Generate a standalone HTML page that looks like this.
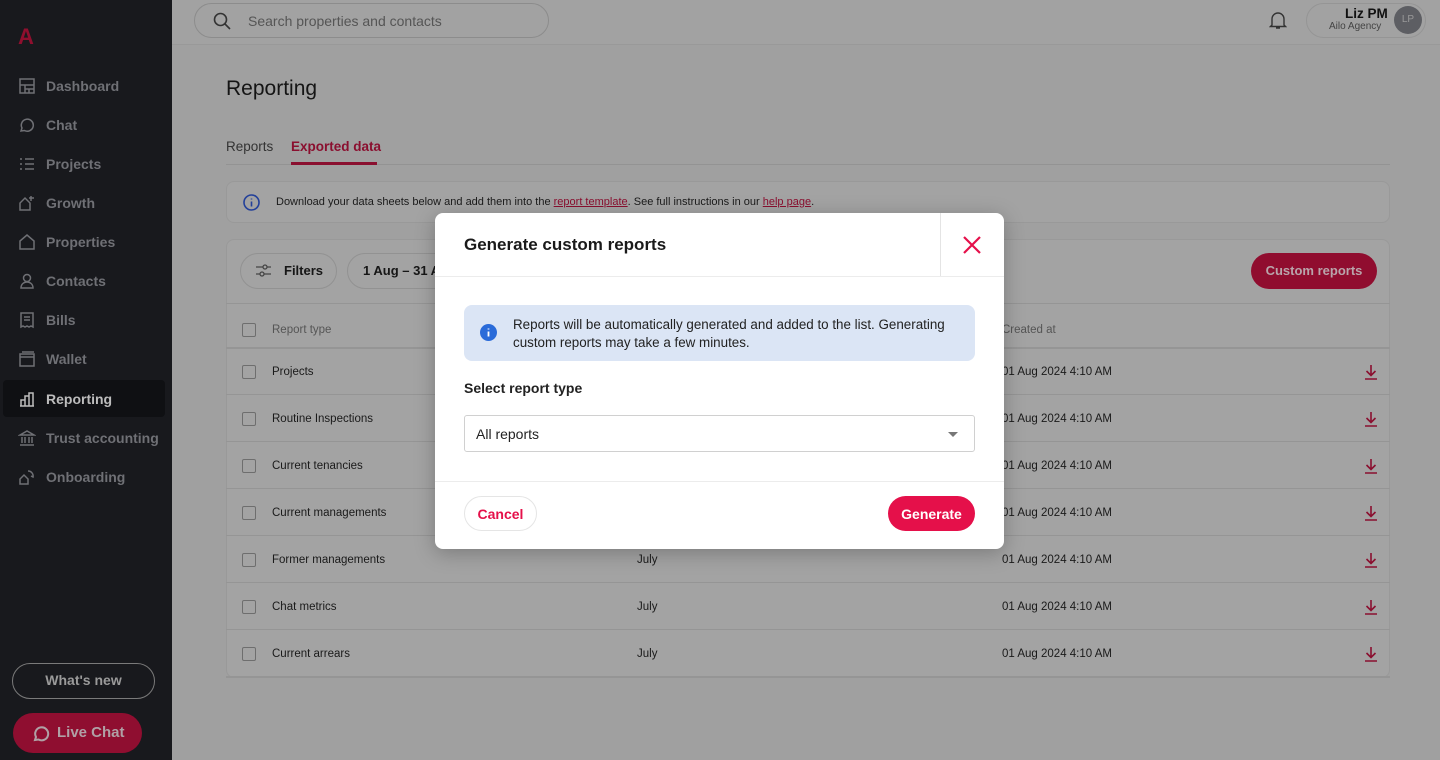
<!DOCTYPE html>
<html><head><meta charset="utf-8"><style>
*{box-sizing:border-box;margin:0;padding:0}
body{width:1440px;height:760px;overflow:hidden;font-family:"Liberation Sans",sans-serif;background:#a0a0a0;position:relative;color:#161616}
.sb{position:absolute;left:0;top:0;width:172px;height:760px;background:#18191d}
.logo{position:absolute;left:18px;top:24px;color:#8f0f2e;font-weight:bold;font-size:22px}
.nav{position:absolute;left:0;width:172px;height:37px;display:flex;align-items:center;color:#6f7075;font-size:14px;font-weight:bold}
.nav svg{position:absolute;left:18px;width:18px;height:18px}
.nav span{position:absolute;left:46px}
.nav.act{left:3px;width:162px;background:#0f1013;border-radius:4px;color:#bdbdbd}
.nav.act svg{left:15px}.nav.act span{left:43px}
.wn{position:absolute;left:12px;top:663px;width:143px;height:36px;border:1.5px solid #7a7a7a;border-radius:18px;color:#9a9a9a;font-size:14px;font-weight:bold;text-align:center;line-height:33px}
.lc{position:absolute;left:13px;top:713px;width:129px;height:40px;background:#8f0e30;border-radius:20px;color:#b0a0a5;font-size:15px;font-weight:bold;line-height:40px;padding-left:44px}
.top{position:absolute;left:172px;top:0;right:0;height:45px;background:#a2a2a2;border-bottom:1px solid #999}
.search{position:absolute;left:194px;top:3px;width:355px;height:35px;border:1px solid #8c8c8c;border-radius:18px;font-size:14px;color:#555;line-height:34px;padding-left:53px}
.user{position:absolute;left:1306px;top:3px;width:120px;height:35px;border:1px solid #959595;border-radius:18px}
.av{position:absolute;left:1394px;top:6px;width:28px;height:28px;border-radius:50%;background:#5d5e63;color:#999;font-size:10px;text-align:center;line-height:28px}
h1{position:absolute;left:226px;top:77px;font-size:21px;font-weight:normal;color:#151515}
.tabs{position:absolute;left:226px;top:139px;width:1164px;height:26px;border-bottom:1px solid #939393;font-size:13.5px}
.card{position:absolute;background:#a3a3a3;border:1px solid #999;border-radius:8px}
.t{position:absolute;font-size:11.5px;color:#1a1a1a}
.row{position:absolute;left:226px;width:1164px;border-top:1px solid #959595}
.cb{position:absolute;left:242px;width:14px;height:14px;border:1.5px solid #6e6e6e;border-radius:2px}
.dl{position:absolute;left:1364px;width:14px;height:16px}
.modal{position:absolute;left:435px;top:213px;width:569px;height:336px;background:#fff;border-radius:8px;box-shadow:0 4px 20px rgba(0,0,0,.25)}
</style></head><body>
<div class="sb">
<div class="logo">A</div>
<div class="nav" style="top:67px"><svg viewBox="0 0 18 18" fill="none" stroke="#6f7075" stroke-width="1.5"><rect x="2" y="2" width="14" height="14"/><path d="M2 8h14M7 8v8M11 12v4M7 12h9"/></svg><span>Dashboard</span></div>
<div class="nav" style="top:106px"><svg viewBox="0 0 18 18" fill="none" stroke="#6f7075" stroke-width="1.5"><path d="M3 15l1-3a6 6 0 1 1 2.5 2.5z"/></svg><span>Chat</span></div>
<div class="nav" style="top:145px"><svg viewBox="0 0 18 18" fill="none" stroke="#6f7075" stroke-width="1.5"><path d="M7 4h9M7 9h9M7 14h9M2 4h2M2 9h2M2 14h2"/></svg><span>Projects</span></div>
<div class="nav" style="top:184px"><svg viewBox="0 0 18 18" fill="none" stroke="#6f7075" stroke-width="1.5"><path d="M2 16V9l5-5 5 5v7zM13 2v5M11 4h5"/></svg><span>Growth</span></div>
<div class="nav" style="top:223px"><svg viewBox="0 0 18 18" fill="none" stroke="#6f7075" stroke-width="1.5"><path d="M2 16V8l7-6 7 6v8z"/></svg><span>Properties</span></div>
<div class="nav" style="top:262px"><svg viewBox="0 0 18 18" fill="none" stroke="#6f7075" stroke-width="1.5"><circle cx="9" cy="6" r="3.5"/><path d="M3 16c0-4 3-6 6-6s6 2 6 6z"/></svg><span>Contacts</span></div>
<div class="nav" style="top:301px"><svg viewBox="0 0 18 18" fill="none" stroke="#6f7075" stroke-width="1.5"><path d="M3 2h12v14l-2-1-2 1-2-1-2 1-2-1-2 1zM6 6h6M6 9h6"/></svg><span>Bills</span></div>
<div class="nav" style="top:340px"><svg viewBox="0 0 18 18" fill="none" stroke="#6f7075" stroke-width="1.5"><rect x="2" y="4" width="14" height="12"/><path d="M2 7h14M4 2h12"/></svg><span>Wallet</span></div>
<div class="nav act" style="top:380px"><svg viewBox="0 0 18 18" fill="none" stroke="#bdbdbd" stroke-width="1.5"><path d="M2 16h14M3 16v-6h4v6M7 16V6h4v10M11 16V3h4v13"/></svg><span>Reporting</span></div>
<div class="nav" style="top:419px"><svg viewBox="0 0 18 18" fill="none" stroke="#6f7075" stroke-width="1.5"><path d="M2 6l7-4 7 4zM4 8v6M7 8v6M11 8v6M14 8v6M2 16h14"/></svg><span>Trust accounting</span></div>
<div class="nav" style="top:458px"><svg viewBox="0 0 18 18" fill="none" stroke="#6f7075" stroke-width="1.5"><path d="M2 16v-5l4-4 4 4v5zM10 3a5 5 0 0 1 5 6l-2-1"/></svg><span>Onboarding</span></div>
<div class="wn">What's new</div>
<div class="lc"><svg style="position:absolute;left:19px;top:11px" width="18" height="18" viewBox="0 0 18 18" fill="none" stroke="#b0a0a5" stroke-width="2"><path d="M3 16l1-3a6.5 6.5 0 1 1 2.5 2.5z"/></svg>Live Chat</div>
</div>
<div class="top"></div>
<div class="search"><svg style="position:absolute;left:18px;top:8px" width="18" height="18" viewBox="0 0 18 18" fill="none" stroke="#333" stroke-width="1.6"><circle cx="7.5" cy="7.5" r="6"/><path d="M12 12l5 5"/></svg>Search properties and contacts</div>
<svg style="position:absolute;left:1269px;top:11px" width="18" height="19" viewBox="0 0 18 19" fill="none" stroke="#333" stroke-width="1.4"><path d="M3 14V8a6 6 0 0 1 12 0v6l1.5 1.5h-15zM7 17h4"/></svg>
<div class="user"></div>
<div style="position:absolute;left:1345px;top:6px;font-size:13.5px;font-weight:bold;color:#111">Liz PM</div>
<div style="position:absolute;left:1329px;top:21px;font-size:10px;color:#444">Ailo Agency</div>
<div class="av">LP</div>
<h1>Reporting</h1>
<div class="tabs"><span style="position:absolute;left:0;top:0;color:#333">Reports</span><span style="position:absolute;left:65px;top:0;color:#8a0f2f;font-weight:bold">Exported data</span><div style="position:absolute;left:65px;top:23px;width:86px;height:3px;background:#8a0f2f"></div></div>
<div class="card" style="left:226px;top:181px;width:1164px;height:42px"></div>
<svg style="position:absolute;left:243px;top:194px" width="17" height="17" viewBox="0 0 17 17" fill="none" stroke="#23409a" stroke-width="1.6"><circle cx="8.5" cy="8.5" r="7.5"/><path d="M8.5 7.5v5M8.5 4.5v1"/></svg>
<div class="t" style="left:276px;top:196px;font-size:11px">Download your data sheets below and add them into the <u style="color:#8a0f2f">report template</u>. See full instructions in our <u style="color:#8a0f2f">help page</u>.</div>
<div class="card" style="left:226px;top:239px;width:1164px;height:439px"></div>
<div style="position:absolute;left:240px;top:253px;width:97px;height:36px;border:1px solid #929292;border-radius:18px;font-size:13px;font-weight:bold;line-height:34px;padding-left:43px">Filters</div>
<svg style="position:absolute;left:255px;top:263px" width="17" height="15" viewBox="0 0 17 15" fill="none" stroke="#444" stroke-width="1.3"><path d="M1 4h15M1 11h15"/><circle cx="10" cy="4" r="2" fill="#a3a3a3"/><circle cx="7" cy="11" r="2" fill="#a3a3a3"/></svg>
<div style="position:absolute;left:347px;top:253px;width:120px;height:36px;border:1px solid #929292;border-radius:18px;font-size:13px;font-weight:bold;line-height:34px;padding-left:15px">1 Aug – 31 Aug</div>
<div style="position:absolute;left:1251px;top:253px;width:126px;height:36px;background:#900d2f;border-radius:18px;color:#b9a5ab;font-size:13px;font-weight:bold;text-align:center;line-height:36px">Custom reports</div>
<div class="row" style="top:303px"></div>
<div class="cb" style="top:323px"></div><div class="t" style="left:272px;top:324px;color:#555">Report type</div>
<div class="t" style="left:1002px;top:324px;color:#555">Created at</div>
<div class="row" style="top:347px;border-top:2px solid #959595"></div>
<div id="rows"></div>
<div class="modal">
<div style="position:absolute;left:29px;top:22px;font-size:17px;font-weight:bold;color:#1a1a1a">Generate custom reports</div>
<div style="position:absolute;left:505px;top:0;width:1px;height:63px;background:#e4e4e4"></div>
<svg style="position:absolute;left:528px;top:23px" width="18" height="18" viewBox="0 0 18 18" stroke="#e5104a" stroke-width="2.2"><path d="M1 1l16 16M17 1L1 17"/></svg>
<div style="position:absolute;left:0;top:63px;width:569px;height:1px;background:#ececec"></div>
<div style="position:absolute;left:29px;top:92px;width:511px;height:56px;background:#dbe5f5;border-radius:8px"></div>
<svg style="position:absolute;left:45px;top:111px" width="17" height="17" viewBox="0 0 17 17"><circle cx="8.5" cy="8.5" r="8.5" fill="#2a6bd9"/><path d="M8.5 7.5v5M8.5 4.5v1" stroke="#fff" stroke-width="1.8"/></svg>
<div style="position:absolute;left:78px;top:103px;font-size:13.4px;line-height:18px;color:#222;width:455px">Reports will be automatically generated and added to the list. Generating custom reports may take a few minutes.</div>
<div style="position:absolute;left:29px;top:167px;font-size:14px;font-weight:bold;color:#222">Select report type</div>
<div style="position:absolute;left:29px;top:202px;width:511px;height:37px;border:1px solid #d0d0d0;border-radius:3px;font-size:14px;line-height:36px;padding-left:11px;color:#222">All reports</div>
<div style="position:absolute;left:513px;top:219px;border:5px solid transparent;border-top:5px solid #777;border-bottom:0"></div>
<div style="position:absolute;left:0;top:268px;width:569px;height:1px;background:#ececec"></div>
<div style="position:absolute;left:29px;top:283px;width:73px;height:35px;border:1px solid #e5e5e5;border-radius:18px;color:#e5104a;font-size:14px;font-weight:bold;text-align:center;line-height:34px">Cancel</div>
<div style="position:absolute;left:453px;top:283px;width:87px;height:35px;background:#e5104a;border-radius:18px;color:#fff;font-size:14px;font-weight:bold;text-align:center;line-height:36px">Generate</div>
</div>
<script>
var n=["Projects","Routine Inspections","Current tenancies","Current managements","Former managements","Chat metrics","Current arrears"],h="";
n.forEach(function(x,i){var y=371+47*i;
if(i>0)h+='<div class="row" style="top:'+(y-24)+'px"></div>';
h+='<div class="cb" style="top:'+(y-6)+'px"></div><div class="t" style="left:272px;top:'+(y-5)+'px">'+x+'</div>';
if(i>=4)h+='<div class="t" style="left:637px;top:'+(y-5)+'px">July</div>';
h+='<div class="t" style="left:1002px;top:'+(y-5)+'px">01 Aug 2024 4:10 AM</div>';
h+='<svg class="dl" style="top:'+(y-7)+'px" viewBox="0 0 14 16" fill="none" stroke="#8a0f2f" stroke-width="1.6"><path d="M7 1v10M2.5 7l4.5 4.5L11.5 7M1 15h12"/></svg>';});
h+='<div class="row" style="top:676px;border-top:2px solid #959595"></div>';
document.getElementById("rows").innerHTML=h;
</script>
</body></html>
